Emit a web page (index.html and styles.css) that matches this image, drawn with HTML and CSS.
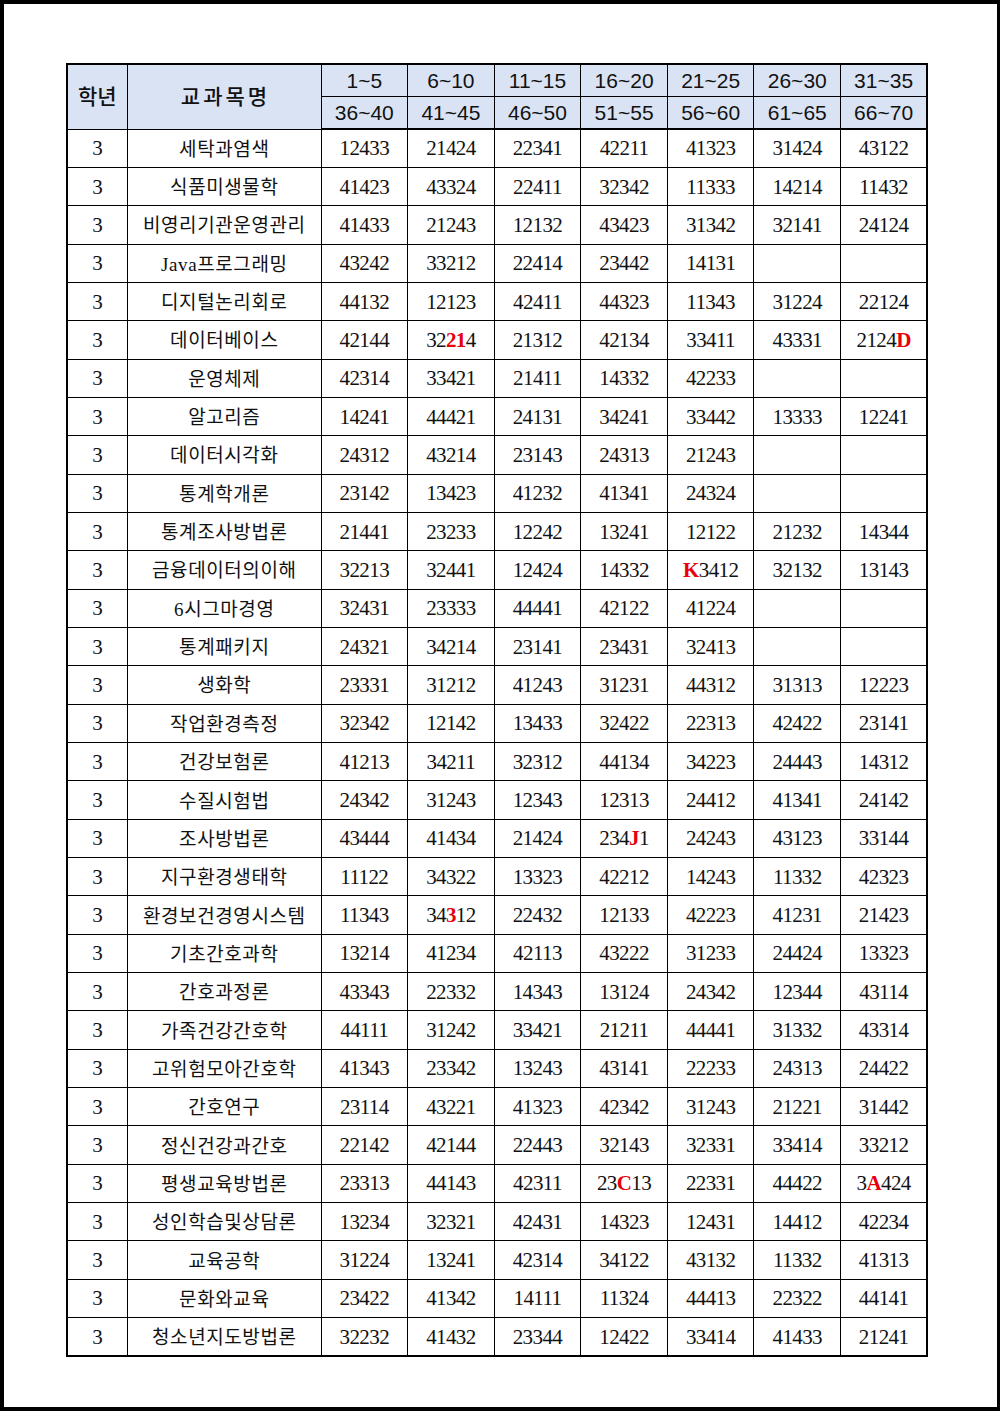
FILE: index.html
```html
<!DOCTYPE html>
<html lang="ko">
<head>
<meta charset="utf-8">
<link rel="stylesheet" href="styles.css">
</head>
<body>
<div class="page">
<table class="grid">
<colgroup>
<col class="c-yr"><col class="c-name"><col class="c-n"><col class="c-n"><col class="c-n"><col class="c-n"><col class="c-n"><col class="c-n"><col class="c-n">
</colgroup>
<thead>
<tr class="h1">
<th rowspan="2" class="hk yr">학년</th>
<th rowspan="2" class="hk nm">교과목명</th>
<th>1~5</th><th>6~10</th><th>11~15</th><th>16~20</th><th>21~25</th><th>26~30</th><th>31~35</th>
</tr>
<tr class="h2">
<th>36~40</th><th>41~45</th><th>46~50</th><th>51~55</th><th>56~60</th><th>61~65</th><th>66~70</th>
</tr>
</thead>
<tbody>
<tr><td>3</td><td class="k">세탁과염색</td><td>12433</td><td>21424</td><td>22341</td><td>42211</td><td>41323</td><td>31424</td><td>43122</td></tr>
<tr><td>3</td><td class="k">식품미생물학</td><td>41423</td><td>43324</td><td>22411</td><td>32342</td><td>11333</td><td>14214</td><td>11432</td></tr>
<tr><td>3</td><td class="k">비영리기관운영관리</td><td>41433</td><td>21243</td><td>12132</td><td>43423</td><td>31342</td><td>32141</td><td>24124</td></tr>
<tr><td>3</td><td class="k">Java프로그래밍</td><td>43242</td><td>33212</td><td>22414</td><td>23442</td><td>14131</td><td></td><td></td></tr>
<tr><td>3</td><td class="k">디지털논리회로</td><td>44132</td><td>12123</td><td>42411</td><td>44323</td><td>11343</td><td>31224</td><td>22124</td></tr>
<tr><td>3</td><td class="k">데이터베이스</td><td>42144</td><td>32<b>21</b>4</td><td>21312</td><td>42134</td><td>33411</td><td>43331</td><td>2124<b>D</b></td></tr>
<tr><td>3</td><td class="k">운영체제</td><td>42314</td><td>33421</td><td>21411</td><td>14332</td><td>42233</td><td></td><td></td></tr>
<tr><td>3</td><td class="k">알고리즘</td><td>14241</td><td>44421</td><td>24131</td><td>34241</td><td>33442</td><td>13333</td><td>12241</td></tr>
<tr><td>3</td><td class="k">데이터시각화</td><td>24312</td><td>43214</td><td>23143</td><td>24313</td><td>21243</td><td></td><td></td></tr>
<tr><td>3</td><td class="k">통계학개론</td><td>23142</td><td>13423</td><td>41232</td><td>41341</td><td>24324</td><td></td><td></td></tr>
<tr><td>3</td><td class="k">통계조사방법론</td><td>21441</td><td>23233</td><td>12242</td><td>13241</td><td>12122</td><td>21232</td><td>14344</td></tr>
<tr><td>3</td><td class="k">금융데이터의이해</td><td>32213</td><td>32441</td><td>12424</td><td>14332</td><td><b>K</b>3412</td><td>32132</td><td>13143</td></tr>
<tr><td>3</td><td class="k">6시그마경영</td><td>32431</td><td>23333</td><td>44441</td><td>42122</td><td>41224</td><td></td><td></td></tr>
<tr><td>3</td><td class="k">통계패키지</td><td>24321</td><td>34214</td><td>23141</td><td>23431</td><td>32413</td><td></td><td></td></tr>
<tr><td>3</td><td class="k">생화학</td><td>23331</td><td>31212</td><td>41243</td><td>31231</td><td>44312</td><td>31313</td><td>12223</td></tr>
<tr><td>3</td><td class="k">작업환경측정</td><td>32342</td><td>12142</td><td>13433</td><td>32422</td><td>22313</td><td>42422</td><td>23141</td></tr>
<tr><td>3</td><td class="k">건강보험론</td><td>41213</td><td>34211</td><td>32312</td><td>44134</td><td>34223</td><td>24443</td><td>14312</td></tr>
<tr><td>3</td><td class="k">수질시험법</td><td>24342</td><td>31243</td><td>12343</td><td>12313</td><td>24412</td><td>41341</td><td>24142</td></tr>
<tr><td>3</td><td class="k">조사방법론</td><td>43444</td><td>41434</td><td>21424</td><td>234<b>J</b>1</td><td>24243</td><td>43123</td><td>33144</td></tr>
<tr><td>3</td><td class="k">지구환경생태학</td><td>11122</td><td>34322</td><td>13323</td><td>42212</td><td>14243</td><td>11332</td><td>42323</td></tr>
<tr><td>3</td><td class="k">환경보건경영시스템</td><td>11343</td><td>34<b>3</b>12</td><td>22432</td><td>12133</td><td>42223</td><td>41231</td><td>21423</td></tr>
<tr><td>3</td><td class="k">기초간호과학</td><td>13214</td><td>41234</td><td>42113</td><td>43222</td><td>31233</td><td>24424</td><td>13323</td></tr>
<tr><td>3</td><td class="k">간호과정론</td><td>43343</td><td>22332</td><td>14343</td><td>13124</td><td>24342</td><td>12344</td><td>43114</td></tr>
<tr><td>3</td><td class="k">가족건강간호학</td><td>44111</td><td>31242</td><td>33421</td><td>21211</td><td>44441</td><td>31332</td><td>43314</td></tr>
<tr><td>3</td><td class="k">고위험모아간호학</td><td>41343</td><td>23342</td><td>13243</td><td>43141</td><td>22233</td><td>24313</td><td>24422</td></tr>
<tr><td>3</td><td class="k">간호연구</td><td>23114</td><td>43221</td><td>41323</td><td>42342</td><td>31243</td><td>21221</td><td>31442</td></tr>
<tr><td>3</td><td class="k">정신건강과간호</td><td>22142</td><td>42144</td><td>22443</td><td>32143</td><td>32331</td><td>33414</td><td>33212</td></tr>
<tr><td>3</td><td class="k">평생교육방법론</td><td>23313</td><td>44143</td><td>42311</td><td>23<b>C</b>13</td><td>22331</td><td>44422</td><td>3<b>A</b>424</td></tr>
<tr><td>3</td><td class="k">성인학습및상담론</td><td>13234</td><td>32321</td><td>42431</td><td>14323</td><td>12431</td><td>14412</td><td>42234</td></tr>
<tr><td>3</td><td class="k">교육공학</td><td>31224</td><td>13241</td><td>42314</td><td>34122</td><td>43132</td><td>11332</td><td>41313</td></tr>
<tr><td>3</td><td class="k">문화와교육</td><td>23422</td><td>41342</td><td>14111</td><td>11324</td><td>44413</td><td>22322</td><td>44141</td></tr>
<tr><td>3</td><td class="k">청소년지도방법론</td><td>32232</td><td>41432</td><td>23344</td><td>12422</td><td>33414</td><td>41433</td><td>21241</td></tr>
</tbody>
</table>
</div>
</body>
</html>
```
FILE: styles.css
```css
html, body {
  margin: 0;
  padding: 0;
  background: #ffffff;
}
.page {
  box-sizing: border-box;
  width: 1000px;
  height: 1411px;
  border: 4px solid #000;
  border-right-width: 3px;
  padding: 59px 0 0 62px;
  background: #fff;
}
.grid {
  border-collapse: collapse;
  table-layout: fixed;
  width: 860px;
  border: 2px solid #000;
  color: #111;
}
.c-yr { width: 60px; }
.c-name { width: 194px; }
.c-n { width: 86.6px; }
.grid th {
  background: #dae3f3;
  border: 1px solid #000;
  font-family: "Liberation Sans", "Noto Sans CJK KR", sans-serif;
  font-weight: 400;
  font-size: 21px;
  height: 31px;
  padding: 0;
  text-align: center;
  vertical-align: middle;
}
.grid thead tr.h2 th {
  border-bottom: 2px solid #000;
}
.grid th.hk {
  font-family: "Noto Sans CJK KR", sans-serif;
  font-weight: 500;
  font-size: 21px;
  padding-bottom: 3px;
}
.grid th.yr { letter-spacing: 0px; }
.grid th.nm { letter-spacing: 3px; text-indent: 3px; }
.grid td {
  border: 1px solid #000;
  height: 38.35px;
  box-sizing: border-box;
  padding: 0;
  line-height: 22px;
  text-align: center;
  vertical-align: middle;
  font-family: "Liberation Serif", "Noto Sans CJK KR", serif;
  font-size: 21px;
  letter-spacing: -0.6px;
}
.grid td.k {
  font-family: "Liberation Serif", "Noto Sans CJK KR", serif;
  font-size: 19px;
  line-height: 22px;
  letter-spacing: 0.6px;
  text-indent: 0.6px;
  padding-top: 3px;
}
.grid td b {
  color: #e8000b;
  font-weight: 700;
}
```
